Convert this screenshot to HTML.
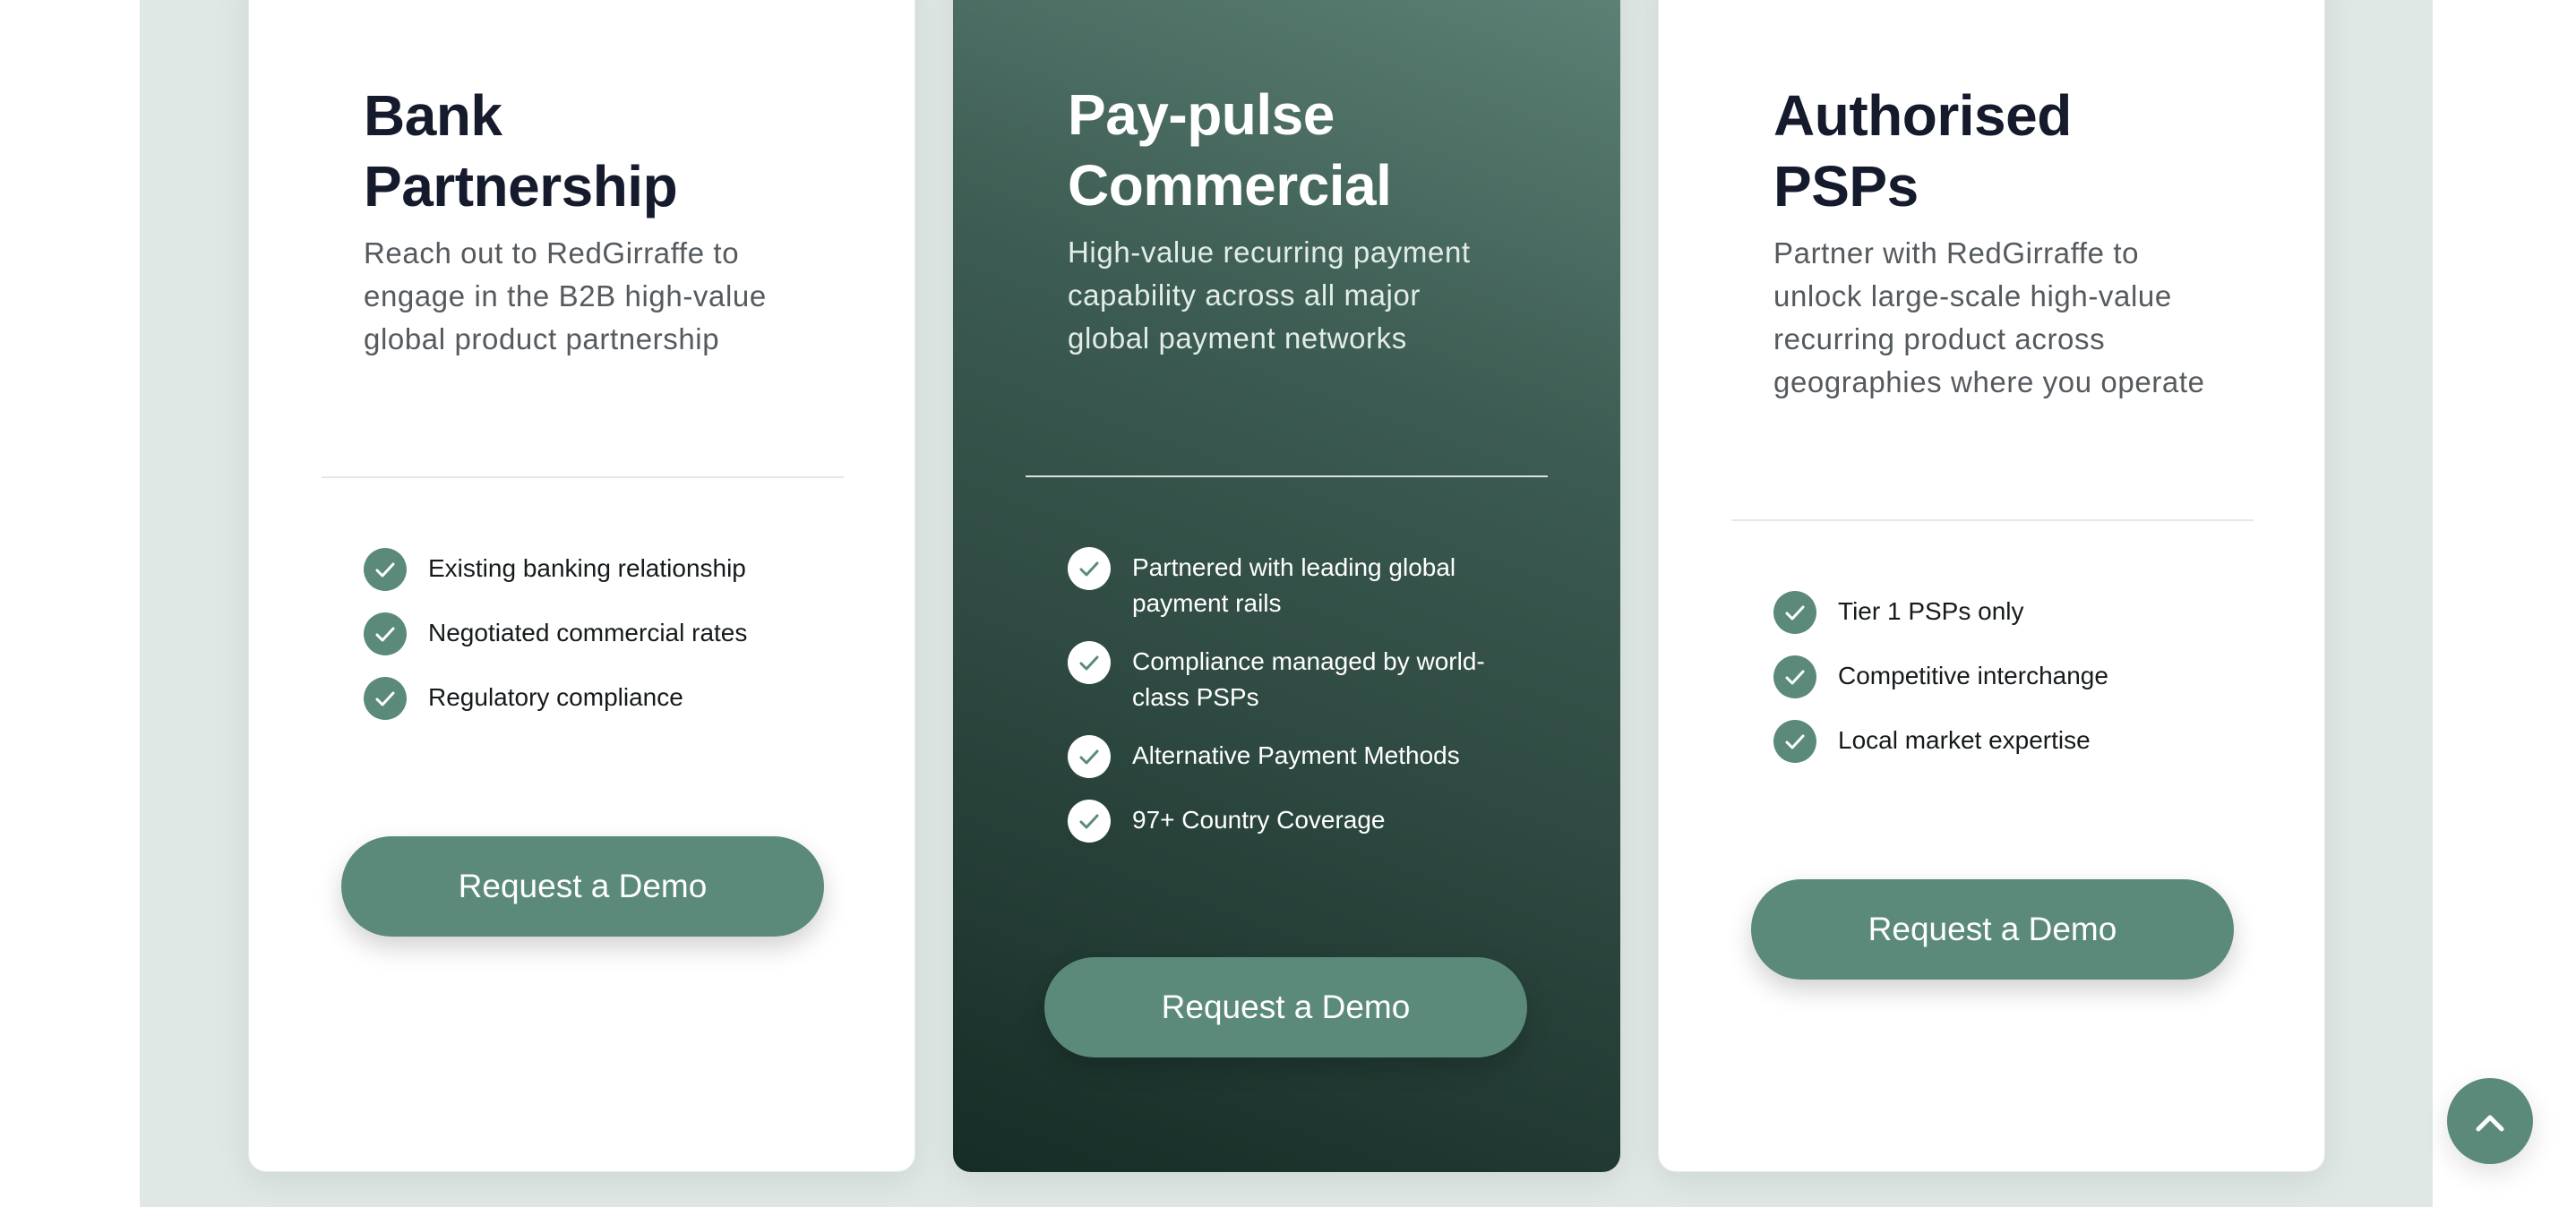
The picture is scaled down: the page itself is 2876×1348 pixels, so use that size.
<!DOCTYPE html>
<html><head><meta charset="utf-8"><style>
*{margin:0;padding:0;box-sizing:border-box}
body{width:2876px;height:1348px;background:#fff;position:relative;overflow:hidden;font-family:"Liberation Sans",Arial,sans-serif}
.band{position:absolute;left:156px;top:0;width:2560px;height:1348px;background:#dfe8e5}
.card{position:absolute;top:-40px;height:1349px;width:745px;background:#fff;border-radius:20px;box-shadow:0 10px 40px rgba(0,0,0,0.08);border:1px solid #e6ecea}
.dark{background:linear-gradient(200deg,#5e8377 0%,#3c5b52 35%,#2c473f 65%,#162c26 100%);border:none}
h2{position:absolute;font-size:64px;line-height:79px;font-weight:600;color:#151a2c;letter-spacing:-0.5px}
.dark h2{color:#fff}
.desc{position:absolute;font-size:33px;line-height:48px;color:#555a5e;width:470px;letter-spacing:0.6px}
.dark .desc{color:#e2ece8}
.hr{position:absolute;height:2px;background:#e3e8ec}
.dark .hr{background:#d9e4e0}
.li{position:absolute;font-size:28px;line-height:40px;color:#161a1c;width:420px}
.dark .li{color:#fff}
.ck{position:absolute;width:48px;height:48px;border-radius:50%;background:#5b8a7b}
.dark .ck{background:#fff}
.ck svg{position:absolute;left:0;top:0}
.btn{position:absolute;width:539px;height:112px;border-radius:56px;background:#5b8a7b;color:#fff;font-size:37px;text-align:center;line-height:112px;box-shadow:0 12px 28px rgba(0,0,0,0.18)}
.top{position:absolute;left:2732px;top:1204px;width:96px;height:96px;border-radius:50%;background:#5b8a7b;box-shadow:0 10px 30px rgba(0,0,0,0.12)}
</style></head><body>
<div class="band"></div>

<div class="card" style="left:277px">
 <h2 style="left:128px;top:129px">Bank<br>Partnership</h2>
 <div class="desc" style="left:128px;top:298px">Reach out to RedGirraffe to engage in the B2B high-value global product partnership</div>
 <div class="hr" style="left:81px;top:571px;width:583px"></div>
 <div class="ck" style="left:128px;top:651px"><svg width="48" height="48"><path d="M15 25 L21 31 L33 18" stroke="#fff" stroke-width="3" fill="none" stroke-linecap="round" stroke-linejoin="round"/></svg></div>
 <div class="li" style="left:200px;top:654px">Existing banking relationship</div>
 <div class="ck" style="left:128px;top:723px"><svg width="48" height="48"><path d="M15 25 L21 31 L33 18" stroke="#fff" stroke-width="3" fill="none" stroke-linecap="round" stroke-linejoin="round"/></svg></div>
 <div class="li" style="left:200px;top:726px">Negotiated commercial rates</div>
 <div class="ck" style="left:128px;top:795px"><svg width="48" height="48"><path d="M15 25 L21 31 L33 18" stroke="#fff" stroke-width="3" fill="none" stroke-linecap="round" stroke-linejoin="round"/></svg></div>
 <div class="li" style="left:200px;top:798px">Regulatory compliance</div>
 <div class="btn" style="left:103px;top:973px">Request a Demo</div>
</div>

<div class="card dark" style="left:1064px">
 <h2 style="left:128px;top:129px">Pay-pulse<br>Commercial</h2>
 <div class="desc" style="left:128px;top:298px;width:460px">High-value recurring payment capability across all major global payment networks</div>
 <div class="hr" style="left:81px;top:571px;width:583px"></div>
 <div class="ck" style="left:128px;top:651px"><svg width="48" height="48"><path d="M15 25 L21 31 L33 18" stroke="#5b8a7b" stroke-width="3" fill="none" stroke-linecap="round" stroke-linejoin="round"/></svg></div>
 <div class="li" style="left:200px;top:654px">Partnered with leading global payment rails</div>
 <div class="ck" style="left:128px;top:756px"><svg width="48" height="48"><path d="M15 25 L21 31 L33 18" stroke="#5b8a7b" stroke-width="3" fill="none" stroke-linecap="round" stroke-linejoin="round"/></svg></div>
 <div class="li" style="left:200px;top:759px">Compliance managed by world-class PSPs</div>
 <div class="ck" style="left:128px;top:861px"><svg width="48" height="48"><path d="M15 25 L21 31 L33 18" stroke="#5b8a7b" stroke-width="3" fill="none" stroke-linecap="round" stroke-linejoin="round"/></svg></div>
 <div class="li" style="left:200px;top:864px">Alternative Payment Methods</div>
 <div class="ck" style="left:128px;top:933px"><svg width="48" height="48"><path d="M15 25 L21 31 L33 18" stroke="#5b8a7b" stroke-width="3" fill="none" stroke-linecap="round" stroke-linejoin="round"/></svg></div>
 <div class="li" style="left:200px;top:936px">97+ Country Coverage</div>
 <div class="btn" style="left:102px;top:1109px">Request a Demo</div>
</div>

<div class="card" style="left:1851px">
 <h2 style="left:128px;top:129px">Authorised<br>PSPs</h2>
 <div class="desc" style="left:128px;top:298px;width:500px">Partner with RedGirraffe to unlock large-scale high-value recurring product across geographies where you operate</div>
 <div class="hr" style="left:81px;top:619px;width:583px"></div>
 <div class="ck" style="left:128px;top:699px"><svg width="48" height="48"><path d="M15 25 L21 31 L33 18" stroke="#fff" stroke-width="3" fill="none" stroke-linecap="round" stroke-linejoin="round"/></svg></div>
 <div class="li" style="left:200px;top:702px">Tier 1 PSPs only</div>
 <div class="ck" style="left:128px;top:771px"><svg width="48" height="48"><path d="M15 25 L21 31 L33 18" stroke="#fff" stroke-width="3" fill="none" stroke-linecap="round" stroke-linejoin="round"/></svg></div>
 <div class="li" style="left:200px;top:774px">Competitive interchange</div>
 <div class="ck" style="left:128px;top:843px"><svg width="48" height="48"><path d="M15 25 L21 31 L33 18" stroke="#fff" stroke-width="3" fill="none" stroke-linecap="round" stroke-linejoin="round"/></svg></div>
 <div class="li" style="left:200px;top:846px">Local market expertise</div>
 <div class="btn" style="left:103px;top:1021px">Request a Demo</div>
</div>

<div class="top"><svg width="96" height="96"><path d="M35 57 L48 44 L61 57" stroke="#fff" stroke-width="5" fill="none" stroke-linecap="round" stroke-linejoin="round"/></svg></div>
</body></html>
